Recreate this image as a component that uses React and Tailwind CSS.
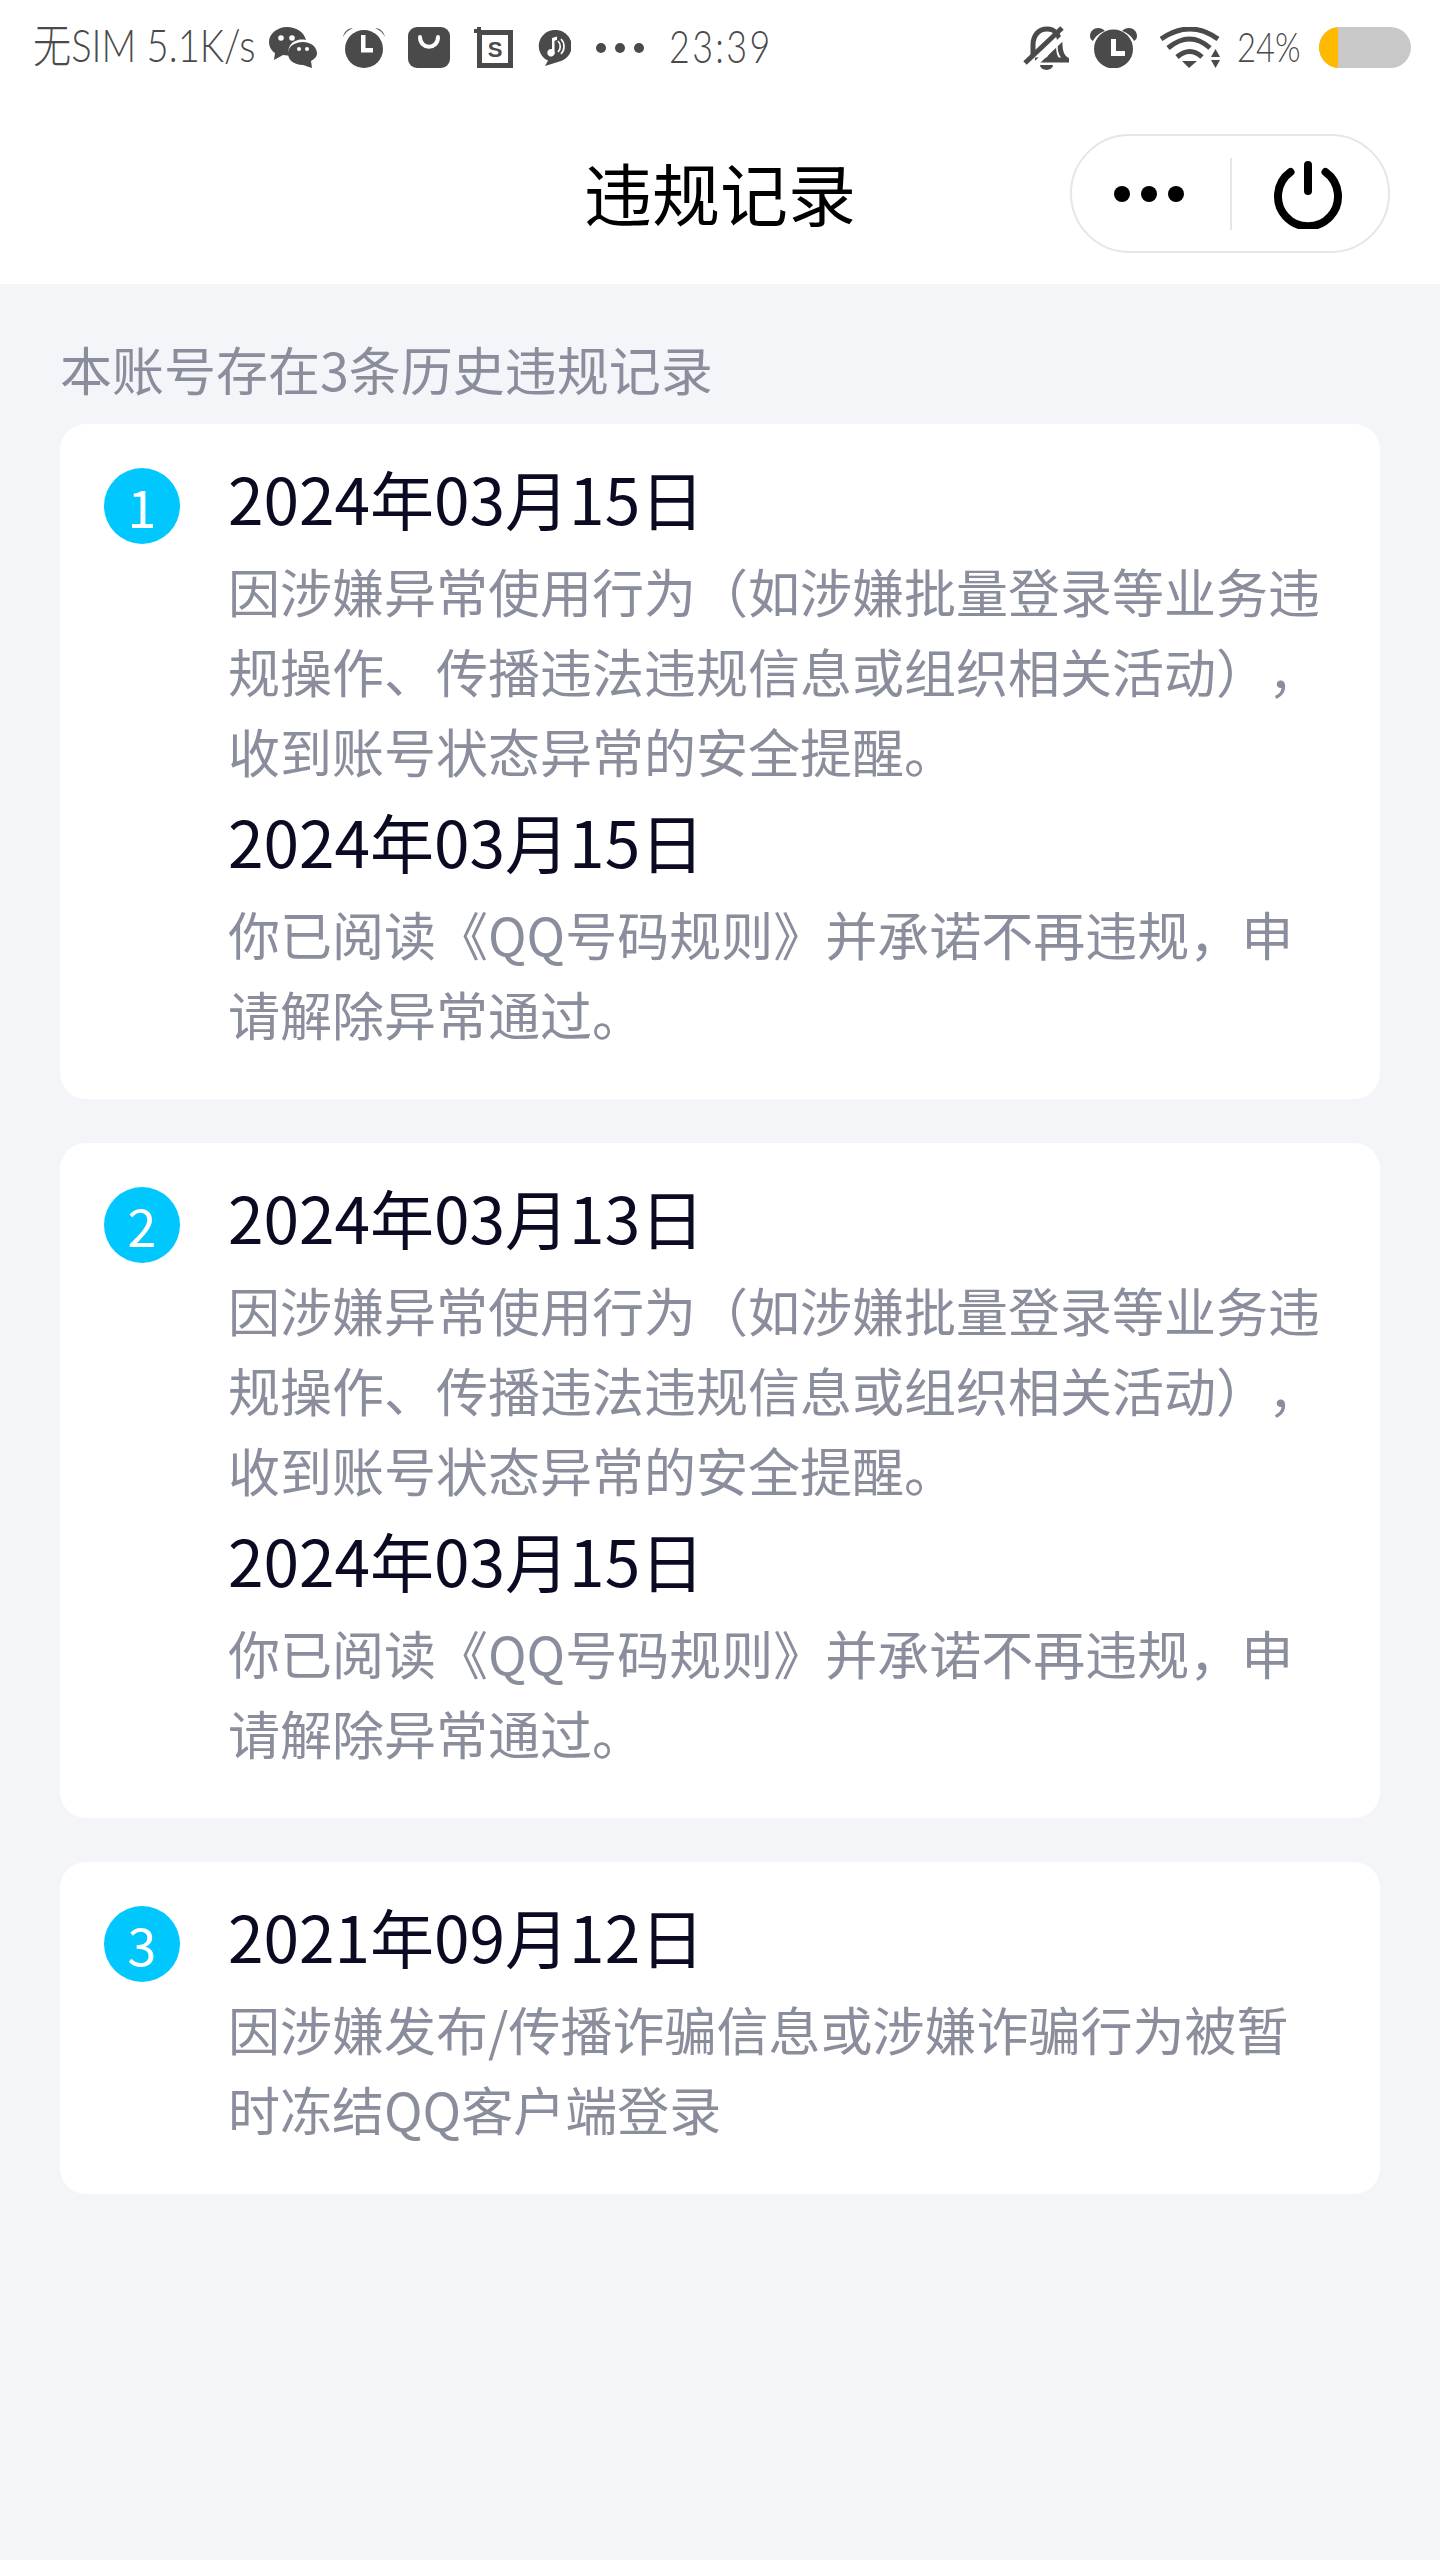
const sans = "font-['Noto_Sans_CJK_SC','Noto_Sans',sans-serif]";
const hand = "font-['Lato','Noto_Sans_CJK_SC',sans-serif] font-light leading-none whitespace-nowrap origin-left";

function StatusBar() {
  return (
    <div className="flex h-[95px] items-center justify-between bg-white pl-[33px] pr-[29px] text-[#4a4a4a]">
      <div className="flex items-center">
        <div className="mb-[5px] w-[236px]">
          <span className={`${hand} inline-block text-[46px] [transform:scaleX(0.83)]`}>无SIM 5.1K/s</span>
        </div>
        <svg width="48" height="41" viewBox="0 0 48 41" fill="#4a4a4a">
          <path d="M18 0C8 0 0 7 0 15c0 5 3 9 6 11l-1 7 9-5c2 .5 4 .5 6 .4C18 22 21 15 29 13c2-.5 5-.6 8 0C35 5 27 0 18 0z" />
          <circle cx="12" cy="11" r="2.8" fill="#fff" />
          <circle cx="23" cy="11" r="2.8" fill="#fff" />
          <path d="M34 15c-9 0-15 5-15 11.500S25 38 34 38l9 3-1-7c4-2 6-5 6-7.500C48 20 42 15 34 15z" />
          <circle cx="30" cy="22" r="2" fill="#fff" />
          <circle cx="38" cy="22" r="2" fill="#fff" />
        </svg>
        <svg width="42" height="41" viewBox="0 0 42 41" fill="#4a4a4a" className="ml-[26px]">
          <circle cx="21" cy="22" r="19" />
          <path d="M0 10C1 5 5 1 10 1 5 3 2 6 0 10zM42 10C41 5 37 1 32 1c5 2 8 5 10 9z" />
          <path d="M18 8h4.500v13H30v4.500H18z" fill="#fff" />
        </svg>
        <svg width="42" height="41" viewBox="0 0 42 41" className="ml-[23px]">
          <rect x="0" y="0" width="42" height="41" rx="9" fill="#4a4a4a" />
          <path d="M12 10c0 13 18 13 18 0" fill="none" stroke="#fff" strokeWidth="4" strokeLinecap="round" />
        </svg>
        <svg width="39" height="41" viewBox="0 0 39 41" className="ml-[24px]">
          <path d="M3 0h4v3h32v38H3V6H0V2h3z" fill="#4a4a4a" />
          <rect x="8" y="8" width="26" height="28" fill="#fff" />
          <text x="21" y="30" textAnchor="middle" fontSize="22" fontWeight="700" fontFamily="Liberation Sans" fill="#4a4a4a">S</text>
        </svg>
        <svg width="33" height="36" viewBox="0 0 33 36" className="ml-[25px]">
          <path d="M16.500 0a16 16 0 0 1 5 31.500L7 36l3-5.500A16 16 0 0 1 16.500 0z" fill="#4a4a4a" />
          <path d="M14 19V8l5-1.500V10l-2.500.8V21a3.800 3.800 0 1 1-2.500-2z" fill="#fff" />
          <path d="M20 11c3 3 3 8 0 11M23 9c4 4 4 11 0 15" fill="none" stroke="#fff" strokeWidth="1.700" />
        </svg>
        <div className="ml-[25px] flex gap-[9px]">
          <span className="h-[10px] w-[10px] rounded-full bg-[#4a4a4a]" />
          <span className="h-[10px] w-[10px] rounded-full bg-[#4a4a4a]" />
          <span className="h-[10px] w-[10px] rounded-full bg-[#4a4a4a]" />
        </div>
        <span className={`${hand} mb-[3px] ml-[25px] inline-block w-[99px] text-[46px] tracking-[3px] [transform:scaleX(0.78)]`}>23:39</span>
      </div>
      <div className="flex items-center">
        <svg width="46" height="44" viewBox="0 0 46 44" fill="none" stroke="#4a4a4a" strokeWidth="5">
          <path d="M10 30V19C10 9 16 3 24 3s13 6 13 16c0 8 2 12 7 15H12" />
          <path d="M33 18c0 8 1 13 5 16H22z" fill="#4a4a4a" stroke="none" />
          <path d="M3 41 44 2" stroke="#fff" strokeWidth="5" transform="translate(3 3)" />
          <path d="M2 37 39 2" strokeWidth="5" />
          <path d="M17 39h13a6.500 5 0 0 1-13 0z" fill="#4a4a4a" stroke="none" />
        </svg>
        <svg width="47" height="41" viewBox="0 0 47 41" fill="#4a4a4a" className="ml-[21px]">
          <circle cx="23.500" cy="22" r="19.500" />
          <path d="M0 9c0-5 4-8 8-8 3 0 5 1 7 3C9 6 5 10 3 14 1 13 0 11 0 9zM47 9c0-5-4-8-8-8-3 0-5 1-7 3 6 2 10 6 12 10 2-1 3-3 3-5z" />
          <path d="M21 12h5v12h9v5H21z" fill="#fff" />
        </svg>
        <svg width="60" height="41" viewBox="0 0 60 41" className="ml-[23px]" fill="none" stroke="#4a4a4a" strokeWidth="5">
          <path d="M1 12Q30-8 58 12" />
          <path d="M8 21Q30 3 50 21" />
          <path d="M17 30Q30 19 42 30" />
          <path d="M22 34h15l-8 7z" fill="#4a4a4a" stroke="none" />
          <path d="M51 30l4.500-8 4.500 8zM51 33h9l-4.500 8z" fill="#4a4a4a" stroke="none" />
        </svg>
        <span className={`${hand} mb-[3px] ml-[17px] inline-block w-[65px] text-[42px] [transform:scaleX(0.78)]`}>24%</span>
        <div className="ml-[17px] flex h-[41px] w-[92px] overflow-hidden rounded-full bg-[#c8c8c8]">
          <div className="h-full w-[19px] bg-[#ffb900]" />
        </div>
      </div>
    </div>
  );
}

function NavBar() {
  return (
    <div className="relative flex h-[189px] items-center justify-center bg-white pt-[5px]">
      <span className={`${sans} text-[68px] leading-none text-black`}>违规记录</span>
      <div className="absolute left-[1070px] top-[39px] flex h-[119px] w-[320px] items-center rounded-full border-2 border-[#e6e6e6]">
        <div className="flex w-[158px] justify-center gap-[11px] pr-[4px]">
          <span className="h-[16px] w-[16px] rounded-full bg-black" />
          <span className="h-[16px] w-[16px] rounded-full bg-black" />
          <span className="h-[16px] w-[16px] rounded-full bg-black" />
        </div>
        <div className="h-[72px] w-[2px] bg-[#e6e6e6]" />
        <div className="flex flex-1 justify-center pr-[4px]">
          <svg width="70" height="68" viewBox="0 0 70 68" fill="none" stroke="#000" strokeWidth="8" strokeLinecap="round" className="mt-[3px]">
            <path d="M35 4v26" />
            <path d="M17.500 11A30 30 0 1 0 52.500 11" />
          </svg>
        </div>
      </div>
    </div>
  );
}

function Card({ n, items }) {
  return (
    <div className="flex rounded-[26px] bg-white pb-[45px] pl-[44px] pr-[40px] pt-[28px]">
      <div className="mt-[16px] flex h-[76px] w-[76px] shrink-0 items-center justify-center rounded-full bg-[#00c8ff] text-[52px] leading-none text-white">
        <span className={sans}>{n}</span>
      </div>
      <div className="ml-[48px] flex-1">
        {items.map((it, i) => (
          <div key={i} className={i ? "mt-[4px]" : ""}>
            <div className={`${sans} mb-[9px] text-[64px] leading-[90px] text-[#0a0a23]`}>{it.date}</div>
            {it.lines.map((l) => (
              <div key={l} className={`${sans} whitespace-nowrap text-[52px] leading-[80px] text-[#8a8d9c] [text-spacing-trim:space-all]`}>{l}</div>
            ))}
          </div>
        ))}
      </div>
    </div>
  );
}

const a = [
  "因涉嫌异常使用行为（如涉嫌批量登录等业务违",
  "规操作、传播违法违规信息或组织相关活动），",
  "收到账号状态异常的安全提醒。",
];
const b = ["你已阅读《QQ号码规则》并承诺不再违规，申", "请解除异常通过。"];

export default function App() {
  return (
    <div className="flex h-[2560px] w-[1440px] flex-col overflow-hidden bg-[#f4f5f9]">
      <StatusBar />
      <NavBar />
      <main className="flex flex-col px-[60px] pt-[47px]">
        <div className={`${sans} text-[52px] leading-[76px] text-[#8a8d9c]`}>本账号存在3条历史违规记录</div>
        <div className="mt-[17px] flex flex-col gap-[44px]">
          <Card n="1" items={[{ date: "2024年03月15日", lines: a }, { date: "2024年03月15日", lines: b }]} />
          <Card n="2" items={[{ date: "2024年03月13日", lines: a }, { date: "2024年03月15日", lines: b }]} />
          <Card n="3" items={[{ date: "2021年09月12日", lines: ["因涉嫌发布/传播诈骗信息或涉嫌诈骗行为被暂", "时冻结QQ客户端登录"] }]} />
        </div>
      </main>
    </div>
  );
}
